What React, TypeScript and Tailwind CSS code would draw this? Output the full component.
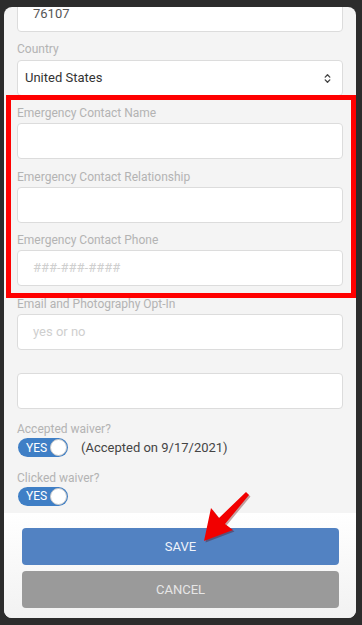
import { ChevronsUpDown } from 'lucide-react';

const font = { fontFamily: 'Roboto, "Noto Sans", sans-serif' };

const Label = ({ text, top }: { text: string; top: string }) => (
  <div className={`${top} mb-[2px] h-4 text-[12px] leading-4 text-[#b3b3b3]`}>{text}</div>
);

const Input = ({ value, placeholder }: { value?: string; placeholder?: string }) => (
  <div className="h-9 rounded-[4px] border border-[#dcdcdc] bg-white px-[15px] flex items-center text-[13px]">
    {value ? (
      <span className="text-[#555]">{value}</span>
    ) : (
      <span className="text-[#cfcfcf]">{placeholder}</span>
    )}
  </div>
);

const Toggle = () => (
  <div className="flex h-[19px] w-[50px] items-center justify-between rounded-full bg-[#3f7fc6] pl-[8px] pr-[1px]">
    <span className="text-[12px] leading-none text-white">YES</span>
    <span className="h-[17px] w-[17px] rounded-full border border-[#c9c9c9] bg-white" />
  </div>
);

export default function App() {
  return (
    <div style={font} className="relative h-[625px] w-[362px] overflow-hidden bg-[#2c2c2c] pl-[4px] pr-[6px] pb-[7px] pt-[7px]">
      <div className="flex h-full flex-col overflow-hidden rounded-lg bg-[#f4f4f4]">
        {/* form */}
        <div className="flex-1 px-[13px]">
          <div className="-mt-[11px]">
            <Input value="76107" />
          </div>

          <div className="mt-[9px] mb-[3px] h-4 text-[12px] leading-4 text-[#b3b3b3]">Country</div>
          <div className="flex h-9 items-center justify-between rounded-[4px] border border-[#dcdcdc] bg-white pl-[7px] pr-[9px] text-[13px] text-[#333]">
            <span>United States</span>
            <ChevronsUpDown size={11} strokeWidth={3} className="text-[#444]" />
          </div>

          <Label text="Emergency Contact Name" top="mt-[9px]" />
          <Input />
          <Label text="Emergency Contact Relationship" top="mt-[10px]" />
          <Input />
          <Label text="Emergency Contact Phone" top="mt-[9px]" />
          <Input placeholder="###-###-####" />
          <Label text="Email and Photography Opt-In" top="mt-[10px]" />
          <Input placeholder="yes or no" />
          <div className="mt-[9px] mb-[2px] h-3" />
          <Input />

          <div className="mt-[12px] h-4 text-[12px] leading-4 text-[#b3b3b3]">Accepted waiver?</div>
          <div className="mt-[1px] flex items-center gap-[13px] pl-[1px]">
            <Toggle />
            <span className="text-[13px] text-[#444]">(Accepted on 9/17/2021)</span>
          </div>
          <div className="mt-[12px] h-4 text-[12px] leading-4 text-[#b3b3b3]">Clicked waiver?</div>
          <div className="mt-[1px] pl-[1px]">
            <Toggle />
          </div>
        </div>

        {/* footer */}
        <div className="flex h-[105px] flex-col gap-[6px] bg-gradient-to-b from-white to-[#f2f2f2] pl-[18px] pr-[17px] pt-[15px]">
          <button className="h-[37px] rounded-[4px] bg-[#5282c2] text-[13px] text-[#eef3fa]">SAVE</button>
          <button className="h-[37px] rounded-[4px] bg-[#9a9a9a] text-[13px] text-[#e6e6e6]">CANCEL</button>
        </div>
      </div>

      {/* annotation box */}
      <div className="pointer-events-none absolute left-[6px] top-[95px] h-[203px] w-[350px] border-[5px] border-[#ff0000]" />

      {/* annotation arrow */}
      <svg className="pointer-events-none absolute left-0 top-0" width="362" height="625">
        <polygon
          points="204,541 211,508 219,518 246,492 249,495 225,524 233,530"
          fill="#5a0000"
          opacity="0.35"
          transform="translate(1.5,1.5)"
        />
        <polygon points="204,541 211,508 219,518 246,492 249,495 225,524 233,530" fill="#f20000" />
      </svg>
    </div>
  );
}
